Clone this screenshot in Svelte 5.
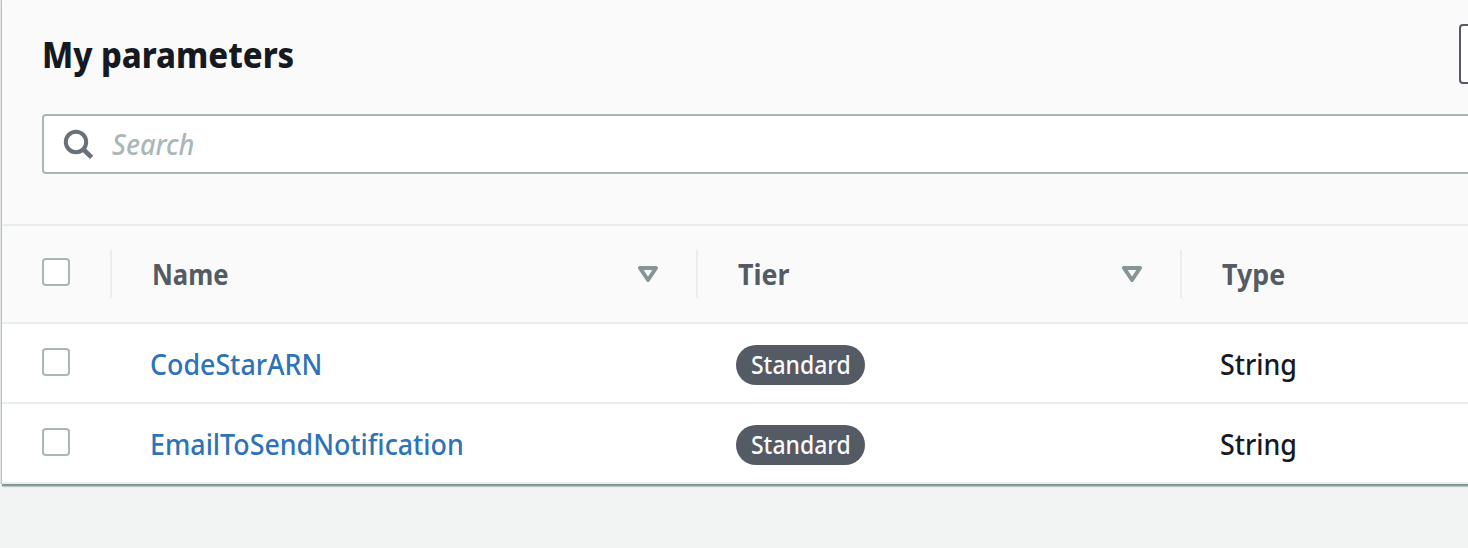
<script>
  const columns = ['Name', 'Tier', 'Type'];
  const rows = [
    { name: 'CodeStarARN', tier: 'Standard', type: 'String' },
    { name: 'EmailToSendNotification', tier: 'Standard', type: 'String' }
  ];
</script>

<main>
  <section class="card">
    <header>
      <div class="heading">
        <h1>My parameters</h1>
        <button aria-label="Action"></button>
      </div>
      <label class="search">
        <svg width="32" height="32" viewBox="0 0 32 32" fill="none" stroke="#687078" stroke-width="4">
          <circle cx="14" cy="14" r="10.2" />
          <path d="M20.5 20.5 L29.6 29.4" stroke-width="4.6" />
        </svg>
        <span class="placeholder">Search</span>
      </label>
    </header>

    <div class="row head">
      <div class="check"><i class="box"></i></div>
      {#each columns as column, i}
        <div class="cell">
          <span class="label" class:wide={i === 0}>{column}</span>
          {#if i < 2}
            <svg width="20" height="16" viewBox="0 0 20 16">
              <path d="M2 2 H18 L10 14 Z" fill="none" stroke="#879596" stroke-width="4" stroke-linejoin="round" />
            </svg>
          {/if}
        </div>
      {/each}
    </div>
    {#each rows as row}
      <div class="row item">
        <div class="check"><i class="box"></i></div>
        <div class="cell link"><span class="text">{row.name}</span></div>
        <div class="cell"><span class="badge"><span class="badge-text">{row.tier}</span></span></div>
        <div class="cell"><span class="text">{row.type}</span></div>
      </div>
    {/each}
  </section>
</main>

<style>
  :global(body) { background: #f2f3f3; overflow: hidden; }
  main {
    box-sizing: border-box;
    height: 548px;
    padding-left: 2px;
    overflow: hidden;
    font: 500 28px/36px "Noto Sans", "Open Sans", sans-serif;
    color: #16191f;
    white-space: nowrap;
  }
  .card {
    width: 1500px;
    background: #fff;
    box-shadow: 0 2px 0 0 #879596, 0 3px 1px 0 rgba(0, 28, 36, .2), -1px 0 0 0 #bfc8c8, -2px 0 0 0 #dfe4e4;
  }
  header {
    box-sizing: border-box;
    height: 226px;
    padding: 24px 0 0 40px;
    background: #fafafa;
    border-bottom: 2px solid #eaeded;
  }
  .heading { display: flex; justify-content: space-between; height: 60px; }
  h1, .label, .text, .badge-text, .placeholder {
    display: inline-block;
    transform-origin: left center;
    transform: scaleX(.957);
  }
  h1 {
    margin: 0;
    font: inherit;
    font-size: 36px;
    font-weight: 800;
    line-height: 62px;
    transform: scaleX(.909);
  }
  .wide { transform: scaleX(.917); }
  .placeholder { transform: scaleX(.97); }
  .badge-text { transform: scaleX(.918); }
  button {
    box-sizing: border-box;
    width: 43px;
    height: 60px;
    padding: 0;
    background: #fff;
    border: 2px solid #545b64;
    border-radius: 4px;
  }
  .search {
    box-sizing: border-box;
    display: flex;
    align-items: center;
    gap: 18px;
    height: 60px;
    margin-top: 30px;
    padding-left: 18px;
    background: #fff;
    border: 2px solid #aab7b8;
    border-radius: 4px;
    color: #aab7b8;
    font-style: italic;
  }
  .row {
    box-sizing: border-box;
    display: grid;
    grid-template-columns: 108px 586px 484px 1fr;
    align-items: center;
    height: 80px;
    border-bottom: 2px solid #eaeded;
  }
  .item { padding-top: 2px; }
  .check { padding: 0 0 4px 40px; }
  .box {
    box-sizing: border-box;
    display: block;
    width: 28px;
    height: 28px;
    background: #fff;
    border: 2px solid #aab7b8;
    border-radius: 4px;
  }
  .cell { display: flex; align-items: center; padding-left: 40px; }
  .head { height: 98px; background: #fafafa; color: #545b64; font-weight: 700; }
  .head .cell {
    box-sizing: border-box;
    justify-content: space-between;
    height: 48px;
    padding-right: 38px;
    border-left: 2px solid #eaeded;
  }
  .link { color: #2e73b8; }
  .badge {
    box-sizing: border-box;
    width: 129px;
    height: 40px;
    margin-top: 2px;
    padding-left: 15px;
    border-radius: 20px;
    background: #545b64;
    color: #fafafa;
    font-size: 25px;
    line-height: 38px;
  }
</style>
